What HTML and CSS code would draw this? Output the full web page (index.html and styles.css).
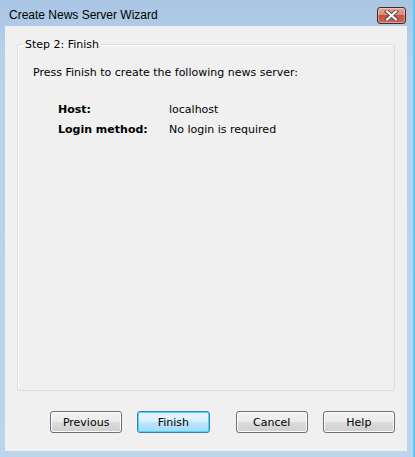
FILE: index.html
```html
<!DOCTYPE html>
<html>
<head>
<meta charset="utf-8">
<link rel="stylesheet" href="styles.css">
</head>
<body>
<div class="window">
  <div class="titlebar">
    <span class="title">Create News Server Wizard</span>
    <div class="close">
      <svg width="15" height="11" viewBox="0 0 15 11">
        <path d="M3 1.5 L12 9.5 M12 1.5 L3 9.5" stroke="#5a4a4a" stroke-width="4" stroke-linecap="square"/>
        <path d="M3 1.5 L12 9.5 M12 1.5 L3 9.5" stroke="#ffffff" stroke-width="2" stroke-linecap="square"/>
      </svg>
    </div>
  </div>
  <div class="client">
    <fieldset class="group">
      <legend class="legend">Step 2: Finish</legend>
      <p class="intro">Press Finish to create the following news server:</p>
      <div class="props">
        <div class="label">Host:</div><div class="value">localhost</div>
        <div class="label">Login method:</div><div class="value">No login is required</div>
      </div>
    </fieldset>
    <div class="buttons">
      <button class="btn">Previous</button>
      <button class="btn default">Finish</button>
      <button class="btn gap">Cancel</button>
      <button class="btn">Help</button>
    </div>
  </div>
</div>
</body>
</html>
```
FILE: styles.css
```css
html, body {
  margin: 0;
  padding: 0;
}
body {
  width: 415px;
  height: 457px;
  overflow: hidden;
  font-family: "DejaVu Sans", sans-serif;
  font-size: 11px;
  color: #000;
}
.window {
  width: 415px;
  height: 457px;
  box-sizing: border-box;
  background: linear-gradient(to bottom, #a9c5e4 0px, #b9d1ea 60px, #bcd4ec 100%);
  border-right: 2px solid #62c6f2;
  display: flex;
  flex-direction: column;
}
.titlebar {
  height: 26px;
  display: flex;
  align-items: flex-start;
  justify-content: space-between;
  padding: 0 7px 0 9px;
}
.title {
  font-family: "Liberation Sans", sans-serif;
  font-size: 12px;
  line-height: 14px;
  margin-top: 8px;
  color: #000;
}
.close {
  margin-top: 7px;
  width: 27px;
  height: 15px;
  border: 1px solid #432b2b;
  border-radius: 3px;
  background: linear-gradient(to bottom, #e8a493 0%, #d98a78 45%, #c4533f 50%, #c96a55 100%);
  box-shadow: inset 0 0 0 1px rgba(255,255,255,0.35);
  display: flex;
  align-items: center;
  justify-content: center;
}
.client {
  margin: 0 6px 6px 5px;
  height: 425px;
  background: #f0f0f0;
  box-sizing: border-box;
  padding: 12px 12px 0 12px;
  display: flex;
  flex-direction: column;
}
.group {
  margin: 0;
  height: 353px;
  box-sizing: border-box;
  border: 1px solid #d5dfe5;
  border-radius: 3px;
  padding: 15px 15px 0 15px;
  box-shadow: inset 1px 1px 0 #fff;
}
.legend {
  padding: 0 2px;
  margin-left: -10px;
  font-size: 11px;
  line-height: 13px;
  color: #000;
}
.intro {
  margin: 0;
  line-height: 14px;
}
.props {
  display: grid;
  grid-template-columns: 111px auto;
  row-gap: 6px;
  margin: 23px 0 0 25px;
  line-height: 14px;
}
.label {
  font-weight: bold;
}
.buttons {
  display: flex;
  padding: 20px 0 0 33px;
  gap: 15px;
}
.btn {
  width: 73px;
  height: 22px;
  box-sizing: border-box;
  border: 1px solid #707070;
  border-radius: 3px;
  background: linear-gradient(to bottom, #f2f2f2 0%, #ebebeb 50%, #dddddd 51%, #cfcfcf 100%);
  box-shadow: inset 0 0 0 1px #fcfcfc;
  font-family: "DejaVu Sans", sans-serif;
  font-size: 11px;
  color: #000;
  padding: 0;
}
.btn.default {
  border-color: #3c7fb1;
  background: linear-gradient(to bottom, #eaf6fd 0%, #d9f0fc 50%, #bee6fd 51%, #a7d9f5 100%);
  box-shadow: inset 0 0 0 1px #48d8fb;
}
.btn.gap {
  margin-left: 11px;
}
```
